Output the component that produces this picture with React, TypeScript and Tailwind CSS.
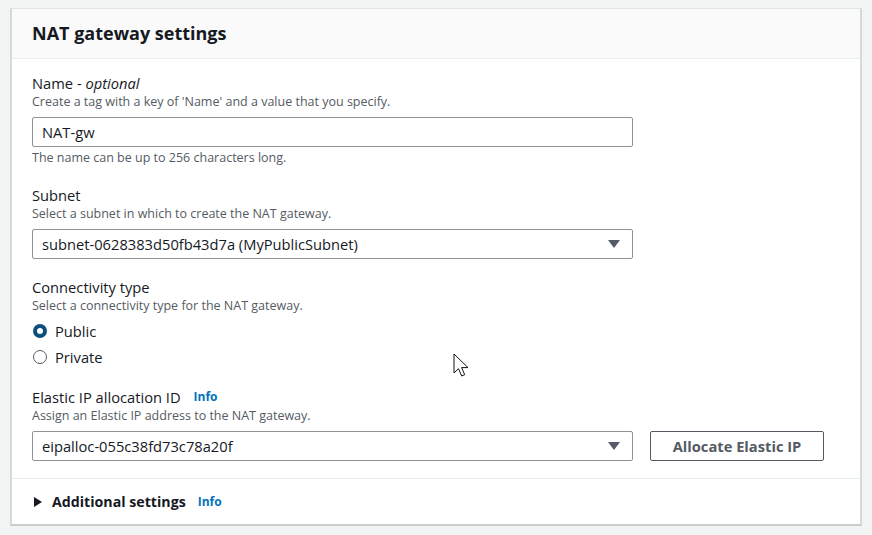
const font = { fontFamily: '"Open Sans", "Noto Sans", Arial, sans-serif' }

function Caret() {
  return (
    <svg width="12" height="8" viewBox="0 0 12 8" className="shrink-0">
      <path d="M0 0h12L6 8z" fill="#545b64" />
    </svg>
  )
}

function Select({ value }: { value: string }) {
  return (
    <div className="flex h-[30px] w-[601px] items-center justify-between rounded-[2px] border border-[#8d9499] bg-white pl-[9px] pr-[12px] text-[14.7px] text-[#16191f]">
      <span>{value}</span>
      <Caret />
    </div>
  )
}

function Field({
  label,
  desc,
  info,
  children,
}: {
  label: React.ReactNode
  desc: string
  info?: boolean
  children: React.ReactNode
}) {
  return (
    <div>
      <div className="flex h-5 items-center text-[14.7px] text-[#16191f]">
        {label}
        {info && <span className="ml-[13px] text-[12px] font-bold text-[#0073bb]">Info</span>}
      </div>
      <div className="h-[18px] text-[12.5px] leading-[18px] text-[#545b64]">{desc}</div>
      <div className="mt-[6px]">{children}</div>
    </div>
  )
}

function Radio({ checked, label }: { checked?: boolean; label: string }) {
  return (
    <div className="flex h-5 items-center gap-[8px] text-[14.7px] text-[#16191f]">
      <span
        className={
          checked
            ? 'ml-px h-[14px] w-[14px] rounded-full border-[4px] border-[#0b4f7c] bg-white'
            : 'ml-px h-[14px] w-[14px] rounded-full border border-[#545b64] bg-white'
        }
      />
      <span>{label}</span>
    </div>
  )
}

export default function App() {
  return (
    <div className="relative h-[535px] w-[872px] bg-[#f2f3f3] pl-[10px] pt-[8px]" style={font}>
      <div className="flex h-[518px] w-[852px] flex-col border-l-2 border-r-2 border-b-2 border-t border-l-[#d5dbdb] border-r-[#d5dbdb] border-b-[#c8cdcd] border-t-[#e1e4e4] bg-white">
        {/* Header */}
        <div className="flex h-[50px] shrink-0 items-center border-b border-[#eaeded] bg-[#fafafa] pl-[20px]">
          <h2 className="text-[18px] font-bold text-[#16191f]">NAT gateway settings</h2>
        </div>

        {/* Body */}
        <div className="flex flex-col pl-[20px] pt-[14px]">
          <Field
            label={
              <>
                Name -&nbsp;<i>optional</i>
              </>
            }
            desc="Create a tag with a key of 'Name' and a value that you specify."
          >
            <div className="flex h-[30px] w-[601px] items-center rounded-[2px] border border-[#8d9499] bg-white pl-[9px] text-[14.7px] text-[#16191f]">
              NAT-gw
            </div>
          </Field>
          <div className="mt-[2px] h-[18px] text-[12.5px] leading-[18px] text-[#545b64]">
            The name can be up to 256 characters long.
          </div>

          <div className="mt-[18px]">
            <Field label="Subnet" desc="Select a subnet in which to create the NAT gateway.">
              <Select value="subnet-0628383d50fb43d7a (MyPublicSubnet)" />
            </Field>
          </div>

          <div className="mt-[18px]">
            <Field label="Connectivity type" desc="Select a connectivity type for the NAT gateway.">
              <div className="flex flex-col gap-[6px]">
                <Radio checked label="Public" />
                <Radio label="Private" />
              </div>
            </Field>
          </div>

          <div className="mt-[20px]">
            <Field label="Elastic IP allocation ID" info desc="Assign an Elastic IP address to the NAT gateway.">
              <div className="flex items-center gap-[17px]">
                <Select value="eipalloc-055c38fd73c78a20f" />
                <button className="h-[30px] w-[174px] rounded-[2px] border border-[#545b64] bg-white text-[14.7px] font-bold text-[#545b64]">
                  Allocate Elastic IP
                </button>
              </div>
            </Field>
          </div>
        </div>

        {/* Footer */}
        <div className="mt-[17px] flex flex-1 items-center gap-[10px] border-t border-[#eaeded] pl-[22px]">
          <svg width="8" height="10" viewBox="0 0 8 10">
            <path d="M0 0l8 5-8 5z" fill="#16191f" />
          </svg>
          <span className="text-[14.2px] font-bold text-[#16191f]">Additional settings</span>
          <span className="ml-[2px] text-[12px] font-bold text-[#0073bb]">Info</span>
        </div>
      </div>

      {/* mouse cursor */}
      <svg className="absolute left-[453px] top-[353px]" width="18" height="26" viewBox="0 0 18 26">
        <path
          d="M1 1v19l4.5-4.3 3.2 7.3 3-1.3-3.1-7.1H15z"
          fill="white"
          stroke="#111"
          strokeWidth="1"
          strokeLinejoin="round"
        />
      </svg>
    </div>
  )
}
